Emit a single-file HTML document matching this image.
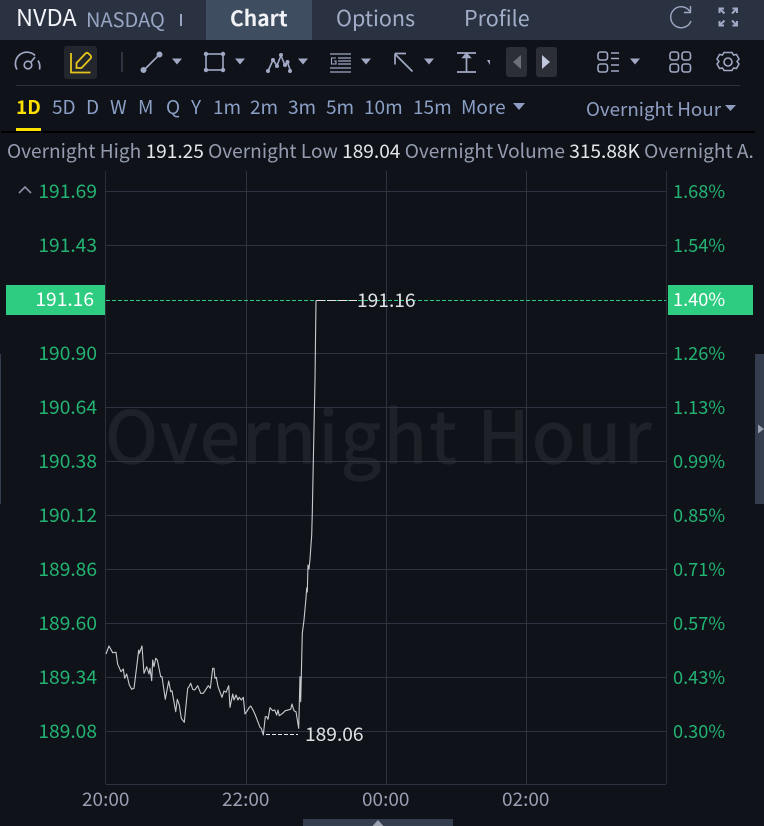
<!DOCTYPE html>
<html><head><meta charset="utf-8">
<style>
html,body{margin:0;padding:0;background:#0f1319;}
#r{position:relative;width:764px;height:826px;overflow:hidden;background:#0f1319;font-family:"Liberation Sans","Noto Sans CJK SC",sans-serif;}
#r *{font-family:"Noto Sans CJK SC","Liberation Sans",sans-serif;}
.t{position:absolute;white-space:nowrap;line-height:24px;height:24px;}
.h{font-size:21.5px;color:#a2aec8;top:6px;}
.p{font-size:19px;color:#8b9fc7;top:95px;}
.l{font-size:19.2px;color:#23b373;width:60px;text-align:right;left:37px;margin-top:-2px;}
.rr{font-size:18.2px;color:#23b373;left:673px;margin-top:-1px;}
.x{font-size:19px;color:#9a9fb3;top:787px;}
.s{font-size:19.1px;top:138px;}
.g{color:#959cb0}.w{color:#e4e6ea}
</style></head><body><div id="r">
<div style="position:absolute;left:0;top:0;width:764px;height:40px;background:#2a3242"></div>
<div style="position:absolute;left:206px;top:0;width:106px;height:40px;background:#3f4d60"></div>
<div class="t" style="left:16px;top:4px;font-size:23.5px;color:#f2f4f8">NVDA</div>
<div class="t" style="left:86px;top:7px;font-size:20px;color:#98a5c2">NASDAQ</div>
<div style="position:absolute;left:180px;top:14px;width:2px;height:12px;background:#98a5c2"></div>
<div class="t" style="left:230px;top:6px;font-size:21px;font-weight:700;color:#f0f2f6">Chart</div>
<div class="t h" style="left:336px">Options</div>
<div class="t h" style="left:464px">Profile</div>

<svg style="position:absolute;left:0;top:0" width="764" height="132" fill="none" stroke="#a0a8c4" stroke-width="1.6">
<path d="M690 11.5A10.5 10.500 0 1 0 691 21" stroke-width="1.4"/><path d="M684 12.500h6.500V6" stroke-width="1.4"/>
<path d="M719.500 13l0-4.500h4.500M719.500 8.500l5 5M737 13V8.500h-4.500M737 8.500l-5 5M719.500 21v4.500h4.500M719.500 25.500l5-5M737 21v4.500h-4.500M737 25.500l-5-5" stroke-width="2"/>
<rect x="64" y="46" width="33" height="33" rx="3" fill="#23262d" stroke="none"/>
<path d="M17 69.500A11.500 11.500 0 0 1 35 55.500M38 60.500a12 12 0 0 1 1.500 9" stroke-width="1.700"/><circle cx="28" cy="65" r="3.800"/><path d="M31 62l4-5"/>
<path d="M71 53v19.500h19.500" stroke="#e5c61c" stroke-width="1.800"/><path d="M76.500 68v-5l9-9.500a2 2 0 0 1 3 0l2 2a2 2 0 0 1 0 3l-9 9.500z" stroke="#e5c61c" stroke-width="1.800"/>
<path d="M122 52v20" stroke="#2e3441" stroke-width="2"/>
<path d="M144 70l16-16"/><circle cx="143.500" cy="70" r="2.200" fill="#a0a8c4"/><circle cx="159.500" cy="54.500" r="2.200" fill="#a0a8c4"/>
<rect x="206" y="54" width="17" height="16" /><g fill="#a0a8c4" stroke="none"><circle cx="206" cy="54" r="2.200"/><circle cx="223" cy="54" r="2.200"/><circle cx="206" cy="70" r="2.200"/><circle cx="223" cy="70" r="2.200"/></g>
<path d="M268 71l5-11 4 5.500 4-10 4 10 2.500-3 3 8.500" /><g fill="#a0a8c4" stroke="none"><circle cx="268" cy="71" r="2"/><circle cx="273" cy="60" r="2"/><circle cx="277" cy="66" r="2"/><circle cx="281" cy="55" r="2"/><circle cx="285" cy="65" r="2"/><circle cx="287.500" cy="62" r="2"/><circle cx="290" cy="71" r="2"/></g>
<path d="M330 54h21M338 58h13M338 61h13M338 64h13M330 68h21M330 72h21" stroke-width="1.200"/><path d="M336 58h-4.500v6h4.500v-3h-2" stroke-width="1.100"/>
<path d="M395 54l17.500 17.500M395 53.500v11M395 53.500h11" stroke-width="1.700"/>
<path d="M457 53h19M457 72h19M466.500 53v19" stroke-width="1.700"/><path d="M463 57.500l3.500-4 3.500 4z" fill="#a0a8c4"/>
<rect x="598" y="52" width="9.500" height="8" rx="2.500"/><rect x="598" y="64" width="9.500" height="8" rx="2.500"/><path d="M611 53h8M611 58.500h8M611 65h8M611 71h8" stroke-width="1.600"/>
<rect x="670" y="52" width="8.500" height="8" rx="2.500"/><rect x="682" y="52" width="8.500" height="8" rx="2.500"/><rect x="670" y="64" width="8.500" height="8" rx="2.500"/><rect x="682" y="64" width="8.500" height="8" rx="2.500"/>
<path d="M724 52.500h8l1.500 2.500 3-.5 2.500 4.500-2 2.500 2 2.500-2.500 4.500-3-.5-1.500 2.500h-8l-1.500-2.500-3 .5-2.500-4.500 2-2.500-2-2.500 2.500-4.500 3 .5z" stroke-width="1.500"/><circle cx="728" cy="62" r="4"/>
<g fill="#a0a8c4" stroke="none"><path d="M172 58.500h10l-5 6zM235 58.500h10l-5 6zM298 58.500h10l-5 6zM361 58.500h10l-5 6zM424 58.500h10l-5 6zM630 58.500h10l-5 6zM487 60h3v5z"/></g>
<path d="M16 85.500H740" stroke="#2b303c" stroke-width="1"/>
<rect x="506" y="47" width="21" height="30" rx="3" fill="#2c2f37" stroke="none"/><rect x="536" y="47" width="21" height="30" rx="3" fill="#2c2f37" stroke="none"/>
<path d="M521 55v14l-8-7z" fill="#6c7078" stroke="none"/><path d="M542 55v14l8-7z" fill="#c0c6de" stroke="none"/>
<path d="M513 103h12l-6 7zM725 105h11l-5.500 6z" fill="#8f9dc3" stroke="none"/>
</svg>

<div class="t p" style="left:16px;font-weight:700;color:#ffe100">1D</div>
<div class="t p" style="left:52px">5D</div>
<div class="t p" style="left:86px">D</div>
<div class="t p" style="left:110px">W</div>
<div class="t p" style="left:138px">M</div>
<div class="t p" style="left:166px">Q</div>
<div class="t p" style="left:191px">Y</div>
<div class="t p" style="left:213px">1m</div>
<div class="t p" style="left:250px">2m</div>
<div class="t p" style="left:288px">3m</div>
<div class="t p" style="left:326px">5m</div>
<div class="t p" style="left:364px">10m</div>
<div class="t p" style="left:413px">15m</div>
<div class="t p" style="left:461px">More</div>
<div class="t p" style="left:586px;top:97px;color:#8f9dc3;font-size:18.8px">Overnight Hour</div>
<div style="position:absolute;left:16px;top:128px;width:25px;height:3px;background:#ffe100"></div>
<div style="position:absolute;left:1px;top:131px;width:754px;height:2px;background:#000"></div>

<div class="t s" style="left:7px"><span class="g">Overnight High</span> <span class="w">191.25</span> <span class="g">Overnight Low</span> <span class="w">189.04</span> <span class="g">Overnight Volume</span> <span class="w">315.88K</span> <span class="g">Overnight A.</span></div>

<div class="t" style="left:105px;top:390px;font-size:71.500px;line-height:84px;height:84px;letter-spacing:2.500px;color:#1e2228;-webkit-text-stroke:1.200px #1e2228">Overnight Hour</div>

<svg style="position:absolute;left:0;top:0" width="764" height="826" fill="none">
<g stroke="#2c3442" stroke-width="1">
<path d="M106 191.500H666M106 245.500H666M106 353.500H666M106 407.500H666M106 461.500H666M106 515.500H666M106 569.500H666M106 623.500H666M106 677.500H666M106 731.500H666M106 784.500H666"/>
<path d="M246.500 171V784M386.500 171V784M526.500 171V784"/>
<path d="M105.500 171V784M666.500 171V784" stroke="#2a2e3a"/>
</g>
<path d="M106 300.500H666" stroke="#2ecc80" stroke-width="1" stroke-dasharray="4 2"/>
<path d="M316 300.500H357" stroke="#e0e2e6" stroke-width="1" stroke-dasharray="9 2"/>
<path d="M19 193l6-6 6 6" stroke="#8a8ea3" stroke-width="1.600"/>
<path d="M106 654L109 646L112.700 652.700L116 652.300L117.700 664.300L121 671.700L123.300 669L124.700 678.300L126.700 674L129.300 685L131.700 689.300L134 688.300L136.700 666.700L138.700 650L139.300 653.300L142 646L144 673.300L146.700 666.700L149 674L150 668.300L151.700 680.700L152.700 660L154 666.700L155.700 658.300L157.300 660L160.700 676.700L162 676.700L165.300 699.300L168.700 681L170.700 691.700L172 690.700L175.700 711.700L177.300 699.300L179.300 705L181.300 718.300L184.300 722.300L187.700 688.300L189 686.700L190.700 683.300L192.700 689.300L194.700 690L197.700 685.700L200.700 693.300L203.300 693.300L208.300 685.700L210.300 688.300L212.700 668.300L214 668.300L215 678.300L216.300 677.300L218 686.700L222 697.300L224 691L226 692.300L228.700 685.700L230 707.300L232.700 694L234 700L236 695L238 700L239.300 697.300L241.300 700L243.300 697.300L245 714L246.700 711.700L249.300 707.300L250.700 706L252.700 709.300L255.300 715L260 727.300L261.300 728.300L263.300 735L265.300 716.700L266.700 716.700L268 719.300L270 707.700L272.700 710.700L274.700 710L276.700 715L278 710L279.300 715.700L282.700 713.300L285.300 710.700L290.700 709.300L292 704L294 710.700L296 711.700L298.700 728.300L300 676.700L300.700 701.700L302.300 633.300L304 620L306 598L306.700 588L307.300 592L308 565L309 569L310 559L311.700 535L312.300 513L313.300 461.700L315 380L316 300.500" stroke="#c8cace" stroke-width="1.100" stroke-linejoin="round"/>
<path d="M266 734.500H298" stroke="#e4e6ea" stroke-width="1" stroke-dasharray="4 2"/>
<rect x="755" y="354" width="9" height="150" fill="#333d4d"/>
<path d="M758 424.500l6 4.500-6 4.500z" fill="#9aa0ae"/>
<rect x="0" y="354" width="1" height="150" fill="#333d4d"/>
<rect x="303" y="819" width="150" height="7" fill="#333d4d"/>
<path d="M372.500 826l5.500-6 5.500 6z" fill="#9aa0ae"/>
</svg>

<div style="position:absolute;left:6px;top:285px;width:99px;height:30px;background:#2ecc80"></div>
<div style="position:absolute;left:668px;top:285px;width:85px;height:30px;background:#2ecc80"></div>

<div class="t l" style="top:180px">191.69</div>
<div class="t l" style="top:234px">191.43</div>
<div class="t l" style="top:288px;left:34px;color:#fff">191.16</div>
<div class="t l" style="top:342px">190.90</div>
<div class="t l" style="top:396px">190.64</div>
<div class="t l" style="top:450px">190.38</div>
<div class="t l" style="top:504px">190.12</div>
<div class="t l" style="top:558px">189.86</div>
<div class="t l" style="top:612px">189.60</div>
<div class="t l" style="top:666px">189.34</div>
<div class="t l" style="top:720px">189.08</div>

<div class="t rr" style="top:180px">1.68%</div>
<div class="t rr" style="top:234px">1.54%</div>
<div class="t rr" style="top:288px;color:#fff">1.40%</div>
<div class="t rr" style="top:342px">1.26%</div>
<div class="t rr" style="top:396px">1.13%</div>
<div class="t rr" style="top:450px">0.99%</div>
<div class="t rr" style="top:504px">0.85%</div>
<div class="t rr" style="top:558px">0.71%</div>
<div class="t rr" style="top:612px">0.57%</div>
<div class="t rr" style="top:666px">0.43%</div>
<div class="t rr" style="top:720px">0.30%</div>

<div class="t" style="left:357px;top:287px;font-size:19.200px;color:#e0e2e6">191.16</div>
<div class="t" style="left:305px;top:721px;font-size:19.200px;color:#e0e2e6">189.06</div>

<div class="t x" style="left:82px">20:00</div>
<div class="t x" style="left:222px">22:00</div>
<div class="t x" style="left:362px">00:00</div>
<div class="t x" style="left:502px">02:00</div>
</div></body></html>
